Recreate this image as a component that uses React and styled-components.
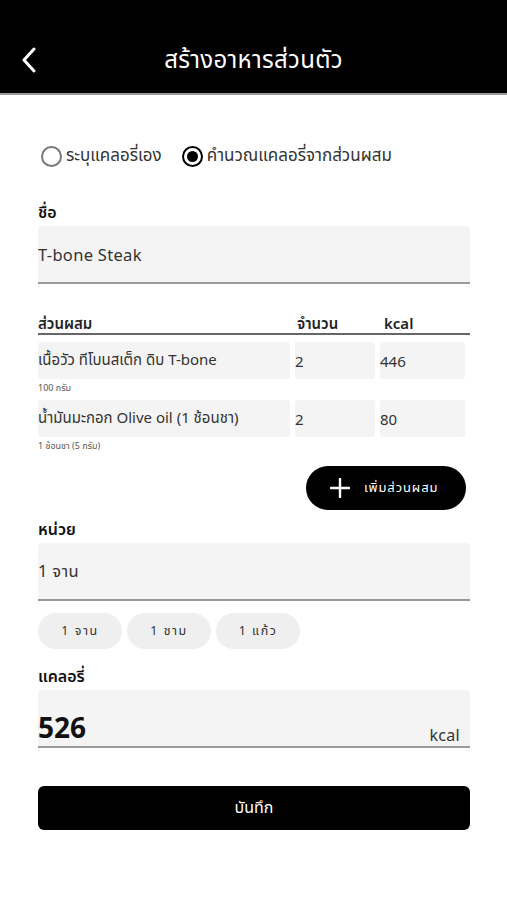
import React from "react";
import styled, { createGlobalStyle } from "styled-components";

const Global = createGlobalStyle`
  html, body { margin: 0; padding: 0; background: #fff; }
  body { font-family: "Noto Sans", "Noto Sans Thai", "Open Sans", sans-serif; color: #222; }
  * { box-sizing: border-box; }
`;

const Page = styled.div`
  width: 507px;
  min-height: 900px;
  background: #fff;
`;

const Header = styled.header`
  height: 95px;
  background: #000;
  border-bottom: 2px solid #9a9a9a;
  display: flex;
  align-items: center;
  justify-content: center;
  position: relative;
  padding-top: 28px;
`;

const Back = styled.button`
  position: absolute;
  left: 16px;
  top: 44px;
  width: 26px;
  height: 32px;
  background: none;
  border: none;
  padding: 0;
  display: flex;
  align-items: center;
  justify-content: center;
`;

const Title = styled.h1`
  margin: 0;
  color: #fff;
  font-size: 24px;
  font-weight: 400;
  letter-spacing: 0.3px;
`;

const Body = styled.main`
  padding: 48px 37px 0 38px;
  display: flex;
  flex-direction: column;
`;

const RadioRow = styled.div`
  display: flex;
  align-items: center;
  gap: 20px;
  padding-left: 3px;
  margin-bottom: 32px;
`;

const RadioItem = styled.label`
  display: flex;
  align-items: center;
  gap: 4px;
  font-size: 17px;
  color: #333;
`;

const RadioCircle = styled.span`
  width: 21px;
  height: 21px;
  border-radius: 50%;
  border: 2px solid ${p => (p.$on ? "#000" : "#777")};
  display: flex;
  align-items: center;
  justify-content: center;
  &::after {
    content: "";
    width: 11px;
    height: 11px;
    border-radius: 50%;
    background: ${p => (p.$on ? "#000" : "transparent")};
  }
`;

const Label = styled.div`
  font-size: 16px;
  font-weight: 600;
  color: #111;
  line-height: 22px;
  margin-bottom: 3px;
`;

const Field = styled.div`
  height: 58px;
  background: #f4f4f4;
  border-radius: 3px 3px 0 0;
  border-bottom: 2px solid #999;
  display: flex;
  align-items: ${p => (p.$big ? "flex-end" : "center")};
  justify-content: space-between;
  font-size: 16.5px;
  letter-spacing: 0.3px;
  color: #333;
`;

const BigNum = styled.span`
  font-size: 28px;
  font-weight: 700;
  color: #111;
  letter-spacing: 0;
`;

const Unit = styled.span`
  font-size: 16px;
  color: #333;
  margin-right: 10px;
`;

const TableHead = styled.div`
  margin-top: 29px;
  display: grid;
  grid-template-columns: 259px 87px 1fr;
  border-bottom: 2px solid #666;
  font-size: 15px;
  font-weight: 600;
  color: #222;
  line-height: 20px;
`;

const Row = styled.div`
  margin-top: ${p => p.$mt || 6}px;
  display: grid;
  grid-template-columns: 252px 80px 85px;
  column-gap: 5px;
`;

const Cell = styled.div`
  height: 37px;
  background: #f4f4f4;
  border-radius: 3px;
  display: flex;
  align-items: center;
  font-size: 15px;
  color: #333;
`;

const Sub = styled.div`
  font-size: 9px;
  color: #555;
  margin-top: 3px;
  line-height: 12px;
`;

const AddWrap = styled.div`
  display: flex;
  justify-content: flex-end;
  margin-top: 14px;
  padding-right: 4px;
`;

const AddBtn = styled.button`
  width: 160px;
  height: 44px;
  border-radius: 22px;
  background: #000;
  border: none;
  color: #fff;
  display: flex;
  align-items: center;
  gap: 14px;
  padding-left: 24px;
  font-family: inherit;
  font-size: 13px;
  letter-spacing: 0.9px;
`;

const Section = styled.div`
  margin-top: ${p => p.$mt || 0}px;
`;

const Chips = styled.div`
  display: flex;
  gap: 5px;
  margin-top: 12px;
`;

const Chip = styled.span`
  width: 84px;
  height: 36px;
  border-radius: 18px;
  background: #efefef;
  display: flex;
  align-items: center;
  justify-content: center;
  font-size: 12.5px;
  letter-spacing: 1.5px;
  color: #333;
`;

const Save = styled.button`
  margin-top: 38px;
  height: 44px;
  width: 100%;
  background: #000;
  border: none;
  border-radius: 6px;
  color: #fff;
  font-family: inherit;
  font-size: 16px;
`;

export default function App() {
  return (
    <Page>
      <Global />
      <Header>
        <Back aria-label="back">
          <svg width="16" height="26" viewBox="0 0 16 26">
            <path d="M13 2 L3 13 L13 24" fill="none" stroke="#fff" strokeWidth="3" strokeLinecap="round" strokeLinejoin="round" />
          </svg>
        </Back>
        <Title>สร้างอาหารส่วนตัว</Title>
      </Header>
      <Body>
        <RadioRow>
          <RadioItem><RadioCircle />ระบุแคลอรี่เอง</RadioItem>
          <RadioItem><RadioCircle $on />คำนวณแคลอรี่จากส่วนผสม</RadioItem>
        </RadioRow>

        <Label>ชื่อ</Label>
        <Field>T-bone Steak</Field>

        <TableHead>
          <span>ส่วนผสม</span>
          <span>จำนวน</span>
          <span>kcal</span>
        </TableHead>

        <Row $mt={7}>
          <Cell>เนื้อวัว ทีโบนสเต็ก ดิบ T-bone</Cell>
          <Cell>2</Cell>
          <Cell>446</Cell>
        </Row>
        <Sub>100 กรัม</Sub>
        <Row>
          <Cell>น้ำมันมะกอก Olive oil (1 ช้อนชา)</Cell>
          <Cell>2</Cell>
          <Cell>80</Cell>
        </Row>
        <Sub>1 ช้อนชา (5 กรัม)</Sub>

        <AddWrap>
          <AddBtn>
            <svg width="20" height="20" viewBox="0 0 20 20">
              <path d="M10 1 V19 M1 10 H19" stroke="#fff" strokeWidth="2.4" strokeLinecap="round" />
            </svg>
            เพิ่มส่วนผสม
          </AddBtn>
        </AddWrap>

        <Section $mt={8}>
          <Label>หน่วย</Label>
          <Field>1 จาน</Field>
          <Chips>
            <Chip>1 จาน</Chip>
            <Chip>1 ชาม</Chip>
            <Chip>1 แก้ว</Chip>
          </Chips>
        </Section>

        <Section $mt={16}>
          <Label>แคลอรี่</Label>
          <Field $big>
            <BigNum>526</BigNum>
            <Unit>kcal</Unit>
          </Field>
        </Section>

        <Save>บันทึก</Save>
      </Body>
    </Page>
  );
}
